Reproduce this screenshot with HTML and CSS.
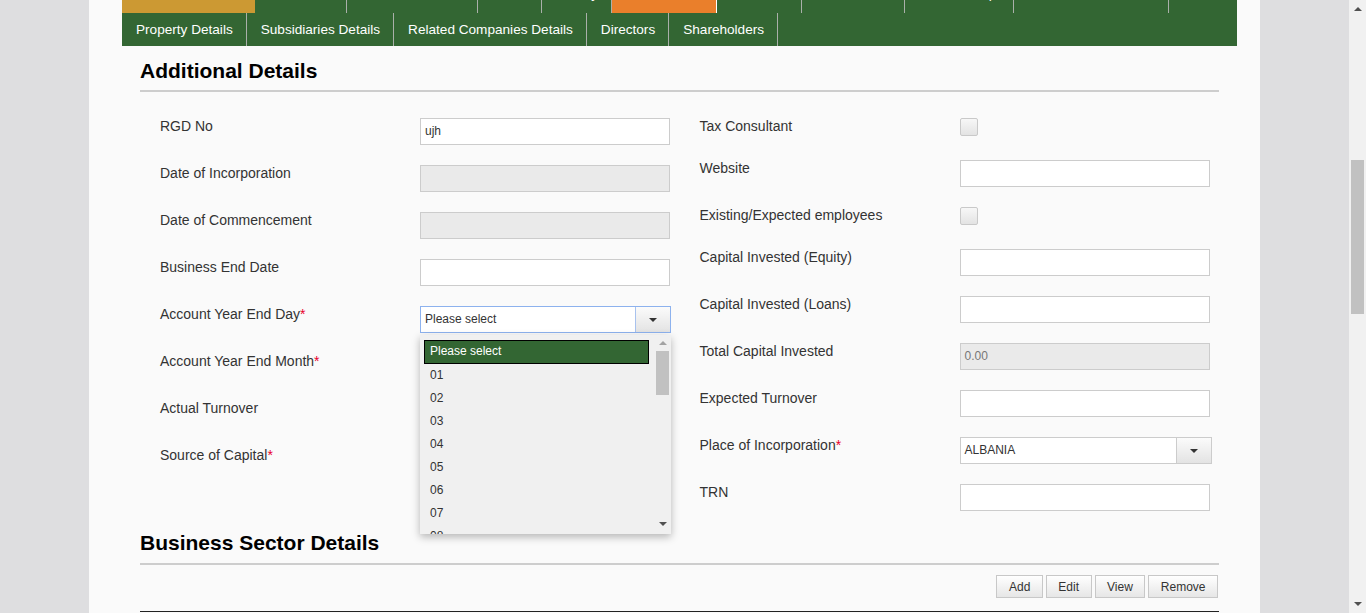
FILE: index.html
```html
<!DOCTYPE html>
<html lang="en">
<head>
<meta charset="utf-8">
<title>Additional Details</title>
<link rel="stylesheet" href="styles.css">
</head>
<body>
<div class="viewport">
  <div class="page">
    <nav class="tabs tabs-top">
      <span class="tab t-gold">Business Details</span>
      <span class="tab">Addresses</span>
      <span class="tab">Contact Details</span>
      <span class="tab">Name</span>
      <span class="tab">Activity</span>
      <span class="tab t-orange">Additional</span>
      <span class="tab">Sectors</span>
      <span class="tab">Licences</span>
      <span class="tab">Membership</span>
      <span class="tab">Related Entities</span>
      <span class="tab t-last">Other</span>
    </nav>
    <nav class="tabs tabs-sub">
      <span class="tab">Property Details</span>
      <span class="tab">Subsidiaries Details</span>
      <span class="tab">Related Companies Details</span>
      <span class="tab">Directors</span>
      <span class="tab">Shareholders</span>
    </nav>

    <section class="content">
      <h3 class="section-title first">Additional Details</h3>
      <div class="form-grid">
        <div class="col">
          <div class="row"><span class="lbl">RGD No</span><div class="input">ujh</div></div>
          <div class="row"><span class="lbl">Date of Incorporation</span><div class="input disabled"></div></div>
          <div class="row"><span class="lbl">Date of Commencement</span><div class="input disabled"></div></div>
          <div class="row"><span class="lbl">Business End Date</span><div class="input"></div></div>
          <div class="row">
            <span class="lbl">Account Year End Day<span class="req">*</span></span>
            <div class="select focus">
              <span class="val">Please select</span>
              <span class="btn"><i class="caret"></i></span>
              <div class="dropdown">
                <div class="opts">
                  <div class="opt sel">Please select</div>
                  <div class="opt">01</div>
                  <div class="opt">02</div>
                  <div class="opt">03</div>
                  <div class="opt">04</div>
                  <div class="opt">05</div>
                  <div class="opt">06</div>
                  <div class="opt">07</div>
                  <div class="opt">08</div>
                  <div class="opt">09</div>
                </div>
                <div class="vscroll">
                  <i class="arr-up light"></i>
                  <i class="vthumb"></i>
                  <i class="arr-down"></i>
                </div>
              </div>
            </div>
          </div>
          <div class="row">
            <span class="lbl">Account Year End Month<span class="req">*</span></span>
            <div class="select covered"><span class="val">Please select</span><span class="btn"><i class="caret"></i></span></div>
          </div>
          <div class="row"><span class="lbl">Actual Turnover</span><div class="input"></div></div>
          <div class="row">
            <span class="lbl">Source of Capital<span class="req">*</span></span>
            <div class="select covered"><span class="val">Please select</span><span class="btn"><i class="caret"></i></span></div>
          </div>
        </div>

        <div class="col">
          <div class="row short"><span class="lbl">Tax Consultant</span><div class="checkbox"></div></div>
          <div class="row"><span class="lbl">Website</span><div class="input"></div></div>
          <div class="row short"><span class="lbl">Existing/Expected employees</span><div class="checkbox"></div></div>
          <div class="row"><span class="lbl">Capital Invested (Equity)</span><div class="input"></div></div>
          <div class="row"><span class="lbl">Capital Invested (Loans)</span><div class="input"></div></div>
          <div class="row"><span class="lbl">Total Capital Invested</span><div class="input disabled">0.00</div></div>
          <div class="row"><span class="lbl">Expected Turnover</span><div class="input"></div></div>
          <div class="row">
            <span class="lbl">Place of Incorporation<span class="req">*</span></span>
            <div class="select wide"><span class="val">ALBANIA</span><span class="btn"><i class="caret"></i></span></div>
          </div>
          <div class="row"><span class="lbl">TRN</span><div class="input"></div></div>
        </div>
      </div>

      <h3 class="section-title">Business Sector Details</h3>
      <div class="toolbar">
        <button class="tbtn" type="button">Add</button>
        <button class="tbtn" type="button">Edit</button>
        <button class="tbtn" type="button">View</button>
        <button class="tbtn" type="button">Remove</button>
      </div>
      <div class="table-top"></div>
    </section>
  </div>
</div>
<div class="scrollbar">
  <i class="arr-up"></i>
  <i class="sthumb"></i>
  <i class="arr-down"></i>
</div>
</body>
</html>
```

FILE: styles.css
```css
* { box-sizing: border-box; }

html, body {
  margin: 0;
  padding: 0;
}

body {
  display: flex;
  height: 613px;
  overflow: hidden;
  font-family: "Liberation Sans", Arial, sans-serif;
  color: #333;
  background: #dedee0;
}

.viewport {
  flex: 1;
  min-width: 0;
  overflow: hidden;
}

.page {
  width: 1171px;
  margin: -20px auto 0;
  padding: 0 23px 0 33px;
  background: #fafafa;
  min-height: 700px;
}

/* ---------- tabs ---------- */
.tabs {
  display: flex;
  height: 33px;
  background: #336633;
}

.tab {
  color: #fff;
  font-size: 13.6px;
  line-height: 33px;
  white-space: nowrap;
}

.tabs-top {
  display: grid;
  grid-template-columns: 133px 92px 131px 64px 70px 105px 85px 103px 109px 155px 68px;
}

.tabs-top .tab {
  text-align: center;
  overflow: hidden;
  line-height: 28px;
  height: 33px;
  border-right: 1px solid #aab0aa;
}

.tabs-top .t-gold { background: #cc9933; border-right: none; }
.tabs-top .t-orange { background: #ea7f2b; border-right-color: #ffffff; }
.tabs-top .t-last { border-right: none; }

.tabs-sub .tab {
  padding: 0 13px 0 14px;
  border-right: 1px solid #aab0aa;
}

/* ---------- content ---------- */
.content {
  padding: 0 18px;
}

.section-title {
  margin: 0;
  padding-bottom: 8px;
  font-size: 21px;
  line-height: 24px;
  font-weight: bold;
  color: #000;
  border-bottom: 2px solid #cdcdcd;
}

.section-title.first {
  margin-top: 13px;
  padding-bottom: 7px;
}

.form-grid {
  display: grid;
  grid-template-columns: minmax(0, 1fr) minmax(0, 1fr);
  margin-top: 26px;
}

.col {
  padding: 0 10px 0 20px;
}

.row {
  display: flex;
  align-items: flex-start;
  margin-bottom: 20px;
  min-height: 22px;
}

.lbl {
  width: 260px;
  flex: none;
  font-size: 14px;
  line-height: 17px;
  color: #333;
}

.req { color: #e8002a; }

.input {
  width: 250px;
  flex: none;
  height: 27px;
  border: 1px solid #cccccc;
  background: #fff;
  font-size: 12px;
  line-height: 25px;
  padding: 0 4px;
  color: #333;
}

.input.disabled {
  background: #eaeaea;
  color: #777;
}

.checkbox {
  width: 18px;
  height: 18px;
  border: 1px solid #c9c9c9;
  border-radius: 2px;
  background: linear-gradient(#f7f7f7, #e3e3e3);
}

.select {
  position: relative;
  display: flex;
  flex: none;
  width: 251px;
  height: 27px;
  border: 1px solid #cccccc;
  background: #fff;
  font-size: 12px;
  color: #333;
}

.select.wide { width: 252px; }

.select .val {
  flex: 1;
  padding: 0 4px;
  line-height: 24px;
}

.select.covered .val { visibility: hidden; }

.select .btn {
  width: 35px;
  flex: none;
  display: flex;
  align-items: center;
  justify-content: center;
  border-left: 1px solid #cccccc;
  background: linear-gradient(#fbfbfb, #e3e3e3);
}

.select.focus {
  border-color: #8db2ee;
}

.select.focus .btn {
  border-left-color: #a8c2ee;
}

.caret {
  display: block;
  width: 0;
  height: 0;
  border-left: 4px solid transparent;
  border-right: 4px solid transparent;
  border-top: 4px solid #333;
}

/* ---------- open dropdown ---------- */
.dropdown {
  position: absolute;
  top: 28px;
  left: -1px;
  width: 251px;
  height: 199px;
  display: flex;
  background: #f0f0f0;
  box-shadow: 0 3px 8px rgba(0, 0, 0, 0.28);
  z-index: 5;
  overflow: hidden;
}

.opts {
  flex: 1;
  padding: 5px 5px 0 4px;
  overflow: hidden;
}

.opt {
  height: 23px;
  line-height: 23px;
  padding-left: 6px;
  font-size: 12px;
  color: #333;
}

.opt.sel {
  height: 24px;
  line-height: 21px;
  padding-left: 5px;
  border: 1px solid #000;
  background: #336633;
  color: #fff;
}

.vscroll {
  width: 17px;
  flex: none;
  display: flex;
  flex-direction: column;
  align-items: center;
}

.vscroll .arr-up { margin-top: 6px; }

.vthumb {
  display: block;
  width: 13px;
  height: 44px;
  margin-top: 6px;
  background: #c1c1c1;
}

.vscroll .arr-down {
  margin-top: auto;
  margin-bottom: 8px;
}

.arr-up, .arr-down {
  display: block;
  width: 0;
  height: 0;
  border-left: 4px solid transparent;
  border-right: 4px solid transparent;
}

.arr-up { border-bottom: 4px solid #505050; }
.arr-up.light { border-bottom-color: #a3a3a3; }
.arr-down { border-top: 4px solid #505050; }

/* ---------- toolbar ---------- */
.toolbar {
  display: flex;
  justify-content: flex-end;
  gap: 3px;
  margin-top: 10px;
  padding-right: 1px;
}

.tbtn {
  height: 23px;
  padding: 0 11.5px;
  font-family: inherit;
  font-size: 12px;
  color: #333;
  border: 1px solid #c8c8c8;
  border-radius: 0;
  background: linear-gradient(#ffffff, #e6e6e6);
}

.table-top {
  margin-top: 13px;
  border-top: 1px solid #222;
}

/* ---------- page scrollbar ---------- */
.scrollbar {
  width: 17px;
  flex: none;
  height: 613px;
  background: #f1f1f1;
  display: flex;
  flex-direction: column;
  align-items: center;
}

.scrollbar .arr-up { margin-top: 7px; }

.sthumb {
  display: block;
  width: 13px;
  height: 154px;
  margin-top: 149px;
  background: #c1c1c1;
}

.scrollbar .arr-down {
  margin-top: auto;
  margin-bottom: 7px;
}
```
